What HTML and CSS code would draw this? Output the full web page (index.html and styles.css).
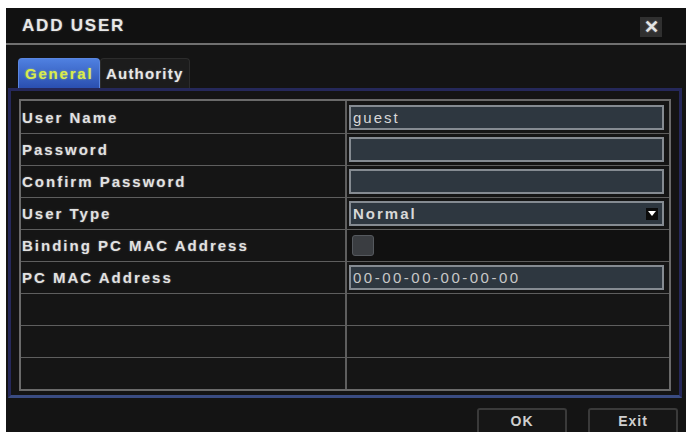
FILE: index.html
```html
<!DOCTYPE html>
<html lang="en">
<head>
<meta charset="UTF-8">
<title>Add User</title>
<link rel="stylesheet" href="styles.css">
</head>
<body>
<div class="dialog">
    <div class="title-bar">
        <span class="title">ADD USER</span>
        <span class="close">&#10005;</span>
    </div>
    <div class="tabs">
        <div class="tab active">General</div>
        <div class="tab">Authority</div>
    </div>
    <div class="panel">
        <div class="grid">
            <div class="row">
                <div class="label">User Name</div>
                <div class="cell"><div class="field">guest</div></div>
            </div>
            <div class="row">
                <div class="label">Password</div>
                <div class="cell"><div class="field"></div></div>
            </div>
            <div class="row">
                <div class="label">Confirm Password</div>
                <div class="cell"><div class="field"></div></div>
            </div>
            <div class="row">
                <div class="label">User Type</div>
                <div class="cell"><div class="field select">Normal<span class="arrow"></span></div></div>
            </div>
            <div class="row">
                <div class="label">Binding PC MAC Address</div>
                <div class="cell plain"><div class="check"></div></div>
            </div>
            <div class="row">
                <div class="label">PC MAC Address</div>
                <div class="cell"><div class="field mac">00-00-00-00-00-00</div></div>
            </div>
            <div class="row"><div class="label"></div><div class="cell"></div></div>
            <div class="row"><div class="label"></div><div class="cell"></div></div>
            <div class="row"><div class="label"></div><div class="cell"></div></div>
        </div>
    </div>
    <div class="footer">
        <button class="btn">OK</button>
        <button class="btn">Exit</button>
    </div>
</div>
</body>
</html>
```
FILE: styles.css
```css
/* DVR style dialog */
body {
    margin: 0;
    background-color: #ffffff;
    font-family: "Liberation Sans", Arial, sans-serif;
}
.dialog {
    margin: 8px 0 0 6px;
    width: 680px;
    height: 424px;
    background-color: #141414;
    display: flex;
    flex-direction: column;
}
.title-bar {
    height: 35px;
    border-bottom: 2px solid #707070;
    display: flex;
    align-items: center;
    justify-content: space-between;
    padding: 0 24px 0 16px;
    background-color: #111111;
}
.title {
    color: #e8e8e8;
    font-size: 17px;
    font-weight: bold;
    letter-spacing: 1.8px;
    text-shadow: 0 0 2px rgba(255, 255, 255, 0.4);
}
.close {
    width: 22px;
    height: 20px;
    background-color: #303030;
    color: #e4e4e4;
    font-size: 18px;
    font-weight: bold;
    display: flex;
    align-items: center;
    justify-content: center;
    margin-top: 2px;
    text-shadow: 0 0 2px rgba(255, 255, 255, 0.4);
}
.tabs {
    display: flex;
    padding: 13px 0 0 12px;
    height: 30px;
}
.tab {
    height: 30px;
    padding: 0 5px;
    display: flex;
    align-items: center;
    font-size: 15px;
    font-weight: bold;
    letter-spacing: 1.2px;
    color: #e8e8e8;
    background-color: #1c1c1c;
    border: 1px solid #2c2c2c;
    border-bottom: none;
    border-radius: 4px 4px 0 0;
    box-sizing: border-box;
    width: 90px;
    text-shadow: 0 0 2px rgba(255, 255, 255, 0.35);
}
.tab.active {
    width: 82px;
    padding: 0 6px;
    letter-spacing: 1.8px;
    background: linear-gradient(#4f80e0, #2a4fb0);
    border-color: #5a86e0;
    color: #d9ec4c;
    text-shadow: 0 0 2px rgba(220, 240, 80, 0.6);
}
.panel {
    margin: 0 4px 0 2px;
    height: 310px;
    box-sizing: border-box;
    border: 3px solid #25285a;
    border-bottom-color: #3a4c82;
    padding: 8px 8px 0 8px;
}
.grid {
    border: 2px solid #6a6a6a;
    background-color: #151515;
}
.row {
    display: flex;
    height: 31px;
    border-top: 1px solid #5e5e5e;
}
.row:first-child {
    border-top: none;
    height: 32px;
}
.label {
    width: 323px;
    border-right: 2px solid #5e5e5e;
    padding-left: 1px;
    display: flex;
    align-items: center;
    color: #e2e2e2;
    font-size: 15px;
    font-weight: bold;
    letter-spacing: 2px;
    text-shadow: 0 0 2px rgba(255, 255, 255, 0.35);
}
.cell {
    flex: 1;
    display: flex;
    align-items: center;
    padding: 0 5px 0 2px;
}
.cell.plain {
    background-color: #111111;
}
.field {
    flex: 1;
    height: 21px;
    background-color: #2e3740;
    border: 2px solid #858b92;
    color: #d8d8d8;
    font-size: 15px;
    letter-spacing: 2px;
    display: flex;
    align-items: center;
    padding-left: 2px;
}
.field.select {
    font-weight: bold;
    justify-content: space-between;
    padding-right: 4px;
}
.arrow {
    width: 12px;
    height: 12px;
    background-color: #0c0c0c;
    display: flex;
    align-items: center;
    justify-content: center;
}
.arrow::after {
    content: "";
    border-left: 4px solid transparent;
    border-right: 4px solid transparent;
    border-top: 5px solid #ffffff;
}
.field.mac {
    letter-spacing: 2.5px;
    color: #c8c8c8;
}
.check {
    width: 20px;
    height: 19px;
    margin-left: 3px;
    background-color: #3a3d41;
    border: 1px solid #55595e;
    border-radius: 3px;
}
.footer {
    display: flex;
    justify-content: flex-end;
    gap: 21px;
    padding: 10px 8px 0 0;
}
.btn {
    width: 90px;
    height: 24px;
    background-color: #161616;
    border: 2px solid #3a3a3a;
    border-bottom: none;
    border-radius: 3px 3px 0 0;
    color: #cfcfcf;
    font-family: "Liberation Sans", Arial, sans-serif;
    font-size: 14px;
    font-weight: bold;
    letter-spacing: 1px;
}
```
